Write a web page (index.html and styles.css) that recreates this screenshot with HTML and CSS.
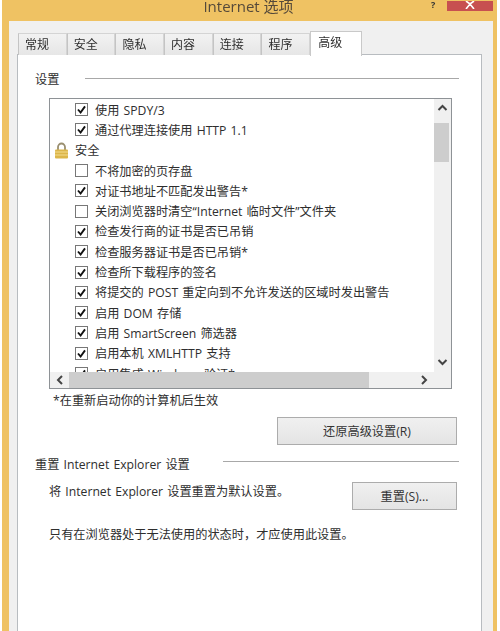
FILE: index.html
```html
<!DOCTYPE html>
<html lang="zh-CN">
<head>
<meta charset="utf-8">
<title>Internet 选项</title>
<link rel="stylesheet" href="styles.css">
</head>
<body>
<div class="frame">
  <header class="titlebar">
    <span class="title">Internet 选项</span>
    <span class="help">?</span>
    <span class="close"><svg width="12" height="8" viewBox="0 0 12 8"><path d="M2 0l4 3 4-3M2 8l4-5 4 5" fill="none" stroke="#fff" stroke-width="1.6"/></svg></span>
  </header>
  <div class="client">
    <nav class="tabs">
      <span class="tab">常规</span>
      <span class="tab">安全</span>
      <span class="tab">隐私</span>
      <span class="tab">内容</span>
      <span class="tab">连接</span>
      <span class="tab">程序</span>
      <span class="tab active">高级</span>
    </nav>
    <main class="panel">
      <div class="legend legend-settings"><span>设置</span><i class="rule"></i></div>
      <section class="listbox">
        <div class="rows">
          <div class="row"><svg class="box" viewBox="0 0 13 13"><rect x=".5" y=".5" width="12" height="12" fill="#fff" stroke="#777"/><path d="M3 6.5l2.6 3L10 3.4" fill="none" stroke="#111" stroke-width="1.9"/></svg>使用 SPDY/3</div>
          <div class="row"><svg class="box" viewBox="0 0 13 13"><rect x=".5" y=".5" width="12" height="12" fill="#fff" stroke="#777"/><path d="M3 6.5l2.6 3L10 3.4" fill="none" stroke="#111" stroke-width="1.9"/></svg>通过代理连接使用 HTTP 1.1</div>
          <div class="row group"><svg class="lock" viewBox="0 0 15 17"><path d="M4 8V5a3.500 3.500 0 0 1 7 0v3" fill="none" stroke="#9a8f70" stroke-width="1.800"/><rect x="1" y="7.500" width="13" height="9" rx="1" fill="#dcb64a"/><path d="M1 10h13M1 13h13" stroke="#f3dc8e" stroke-width="1"/></svg>安全</div>
          <div class="row"><svg class="box" viewBox="0 0 13 13"><rect x=".5" y=".5" width="12" height="12" fill="#fff" stroke="#777"/></svg>不将加密的页存盘</div>
          <div class="row"><svg class="box" viewBox="0 0 13 13"><rect x=".5" y=".5" width="12" height="12" fill="#fff" stroke="#777"/><path d="M3 6.5l2.6 3L10 3.4" fill="none" stroke="#111" stroke-width="1.9"/></svg>对证书地址不匹配发出警告*</div>
          <div class="row"><svg class="box" viewBox="0 0 13 13"><rect x=".5" y=".5" width="12" height="12" fill="#fff" stroke="#777"/></svg>关闭浏览器时清空“Internet 临时文件”文件夹</div>
          <div class="row"><svg class="box" viewBox="0 0 13 13"><rect x=".5" y=".5" width="12" height="12" fill="#fff" stroke="#777"/><path d="M3 6.5l2.6 3L10 3.4" fill="none" stroke="#111" stroke-width="1.9"/></svg>检查发行商的证书是否已吊销</div>
          <div class="row"><svg class="box" viewBox="0 0 13 13"><rect x=".5" y=".5" width="12" height="12" fill="#fff" stroke="#777"/><path d="M3 6.5l2.6 3L10 3.4" fill="none" stroke="#111" stroke-width="1.9"/></svg>检查服务器证书是否已吊销*</div>
          <div class="row"><svg class="box" viewBox="0 0 13 13"><rect x=".5" y=".5" width="12" height="12" fill="#fff" stroke="#777"/><path d="M3 6.5l2.6 3L10 3.4" fill="none" stroke="#111" stroke-width="1.9"/></svg>检查所下载程序的签名</div>
          <div class="row"><svg class="box" viewBox="0 0 13 13"><rect x=".5" y=".5" width="12" height="12" fill="#fff" stroke="#777"/><path d="M3 6.5l2.6 3L10 3.4" fill="none" stroke="#111" stroke-width="1.9"/></svg>将提交的 POST 重定向到不允许发送的区域时发出警告</div>
          <div class="row"><svg class="box" viewBox="0 0 13 13"><rect x=".5" y=".5" width="12" height="12" fill="#fff" stroke="#777"/><path d="M3 6.5l2.6 3L10 3.4" fill="none" stroke="#111" stroke-width="1.9"/></svg>启用 DOM 存储</div>
          <div class="row"><svg class="box" viewBox="0 0 13 13"><rect x=".5" y=".5" width="12" height="12" fill="#fff" stroke="#777"/><path d="M3 6.5l2.6 3L10 3.4" fill="none" stroke="#111" stroke-width="1.9"/></svg>启用 SmartScreen 筛选器</div>
          <div class="row"><svg class="box" viewBox="0 0 13 13"><rect x=".5" y=".5" width="12" height="12" fill="#fff" stroke="#777"/><path d="M3 6.5l2.6 3L10 3.4" fill="none" stroke="#111" stroke-width="1.9"/></svg>启用本机 XMLHTTP 支持</div>
          <div class="row"><svg class="box" viewBox="0 0 13 13"><rect x=".5" y=".5" width="12" height="12" fill="#fff" stroke="#777"/><path d="M3 6.5l2.6 3L10 3.4" fill="none" stroke="#111" stroke-width="1.9"/></svg>启用集成 Windows 验证*</div>
        </div>
        <div class="vbar">
          <svg class="arrow" width="17" height="18" viewBox="0 0 17 18"><path d="M4.500 11l4-4 4 4" fill="none" stroke="#444" stroke-width="2"/></svg>
          <div class="vthumb"></div>
          <svg class="arrow arrow-down" width="17" height="18" viewBox="0 0 17 18"><path d="M4.500 7l4 4 4-4" fill="none" stroke="#444" stroke-width="2"/></svg>
        </div>
        <div class="hbar">
          <svg class="arrow" width="19" height="16" viewBox="0 0 19 16"><path d="M12 4l-4 4 4 4" fill="none" stroke="#444" stroke-width="2"/></svg>
          <div class="hthumb"></div>
          <svg class="arrow arrow-right" width="19" height="16" viewBox="0 0 19 16"><path d="M7 4l4 4-4 4" fill="none" stroke="#444" stroke-width="2"/></svg>
        </div>
      </section>
      <p class="note">*在重新启动你的计算机后生效</p>
      <div class="restore-line"><button class="btn btn-wide">还原高级设置(R)</button></div>
      <div class="legend legend-reset"><span>重置 Internet Explorer 设置</span><i class="rule"></i></div>
      <div class="reset-line">
        <p class="text">将 Internet Explorer 设置重置为默认设置。</p>
        <button class="btn btn-small">重置(S)...</button>
      </div>
      <p class="text warn">只有在浏览器处于无法使用的状态时，才应使用此设置。</p>
    </main>
  </div>
</div>
</body>
</html>
```
FILE: styles.css
```css
* { box-sizing: border-box; }
html, body { margin: 0; height: 631px; overflow: hidden; background: #fff; }
body {
  font-family: "Open Sans", "Noto Sans CJK SC", sans-serif;
  font-size: 12.2px;
  word-spacing: 1px;
  color: #2e2e2e;
}
.frame {
  width: 495px;
  height: 631px;
  margin-left: 2px;
  padding-top: 1px;
  background: #efc263;
  display: flex;
  flex-direction: column;
  filter: blur(0.35px);
}
.titlebar {
  height: 20px;
  flex: none;
  position: relative;
  display: flex;
  justify-content: center;
  padding-right: 2px;
}
.title { font-size: 15px; line-height: 11px; color: #55493a; word-spacing: 0; }
.help {
  position: absolute; left: 429px; top: 0;
  font-size: 9px; font-weight: 700; line-height: 7px; color: #333;
}
.close {
  position: absolute; left: 445px; top: 0;
  width: 46px; height: 10px;
  background: #c75050;
  display: flex; justify-content: center;
}
.client {
  flex: 1;
  margin: 0 4px 0 7px;
  background: #f0f0f0;
  padding: 10px 11px 0 8px;
  display: flex;
  flex-direction: column;
  min-height: 0;
}
.tabs { display: flex; height: 24px; padding: 2px 0 0 1px; flex: none; position: relative; z-index: 1; }
.tab {
  width: 48.7px;
  height: 22px;
  background: linear-gradient(#f2f2f2, #e6e6e6);
  border: 1px solid #d4d4d4;
  border-bottom: 0;
  border-left-color: #c4c4c4;
  font-size: 12px;
  line-height: 21px;
  padding-left: 6px;
}
.tab.active {
  width: 52px;
  height: 25px;
  margin-top: -2px;
  background: #fff;
  border-color: #c9c9c9;
  line-height: 21px;
  padding-left: 7px;
}
.panel {
  flex: 1;
  margin-top: -1px;
  background: #fff;
  border: 1px solid #b8bcc0;
  border-bottom: 0;
  padding: 0 22px 0 17px;
  min-height: 0;
}
.legend { display: flex; align-items: center; }
.legend span { flex: none; }
.rule { flex: 1; height: 1px; background: #a8a8a8; display: block; margin-top: -2px; }
.legend-settings { height: 20px; margin-top: 14px; }
.legend-settings .rule { margin-left: 26px; }
.legend-reset { height: 20px; margin-top: 9px; }
.legend-reset .rule { margin-left: 33px; margin-top: -6px; }
.listbox {
  width: 403px;
  height: 291px;
  margin: 9px 0 0 14px;
  border: 1px solid #8e9296;
  display: grid;
  grid-template-columns: 1fr 17px;
  grid-template-rows: 1fr 16px;
  overflow: hidden;
}
.rows { overflow: hidden; padding: 0.5px 0 0 4px; min-height: 0; }
.row {
  height: 20.3px;
  display: flex;
  align-items: center;
  gap: 7px;
  padding-left: 21px;
  white-space: nowrap;
}
.box { width: 13px; height: 13px; flex: none; }
.row.group { padding-left: 0; gap: 6px; }
.lock { width: 15px; height: 17px; flex: none; }
.vbar { background: #f0f0f0; display: flex; flex-direction: column; }
.vthumb { height: 39px; width: 15px; margin-top: 6px; background: #cdcdcd; }
.arrow { flex: none; display: block; }
.arrow-down { margin-top: auto; margin-bottom: 1px; }
.hbar { grid-column: 1 / 3; background: #f0f0f0; display: flex; align-items: center; }
.hthumb { width: 300px; height: 16px; background: #cdcdcd; }
.arrow-right { margin-left: auto; margin-right: 17px; }
.note { margin: 3px 0 0 18px; height: 17px; line-height: 17px; }
.restore-line { display: flex; justify-content: flex-end; margin: 8px 2px 0 0; }
.btn {
  font: inherit;
  word-spacing: 0;
  color: #333;
  background: linear-gradient(#f0f0f0, #e4e4e4);
  border: 1px solid #acacac;
  padding: 0;
  height: 28px;
}
.btn-wide { width: 180px; }
.btn-small { width: 105px; margin-top: 8px; }
.reset-line {
  display: flex;
  justify-content: space-between;
  margin: 0 2px 0 14px;
}
.text { margin: 0; line-height: 17px; }
.reset-line .text { padding-top: 9px; }
.warn { margin: 16px 0 0 14px; }
```
